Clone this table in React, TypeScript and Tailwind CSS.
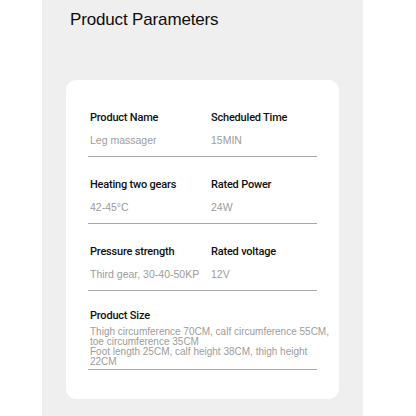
import React from 'react';

// 파라미터 행 데이터
const rows: { label: string; value: string }[][] = [
  [
    { label: 'Product Name', value: 'Leg massager' },
    { label: 'Scheduled Time', value: '15MIN' },
  ],
  [
    { label: 'Heating two gears', value: '42-45°C' },
    { label: 'Rated Power', value: '24W' },
  ],
  [
    { label: 'Pressure strength', value: 'Third gear, 30-40-50KP' },
    { label: 'Rated voltage', value: '12V' },
  ],
];

const sizeLines = [
  'Thigh circumference 70CM, calf circumference 55CM,',
  'toe circumference 35CM',
  'Foot length 25CM, calf height 38CM, thigh height',
  '22CM',
];

export default function App() {
  return (
    <div className="w-[416px] h-[416px] bg-white flex justify-start font-['Liberation_Sans',Arial,sans-serif]">
      <div className="ml-[42px] w-[321px] h-full bg-[#efefef] flex flex-col">
        {/* 제목 */}
        <h1 className="pt-[10px] pl-[28px] text-[17px] leading-[20px] tracking-[-0.15px] text-[#0d0d0d]">
          Product Parameters
        </h1>

        {/* 카드 */}
        <section className="mt-[50px] mx-[24px] rounded-[10px] bg-white pt-[10px] pb-[29px] pl-[22px] pr-[22px]">
          {rows.map((row, i) => (
            <div key={i} className="grid grid-cols-[121px_1fr] pt-[22px] pb-[10px] border-b border-[#a9a9a9]">
              {row.map((cell) => (
                <div key={cell.label} className="pl-[2px]">
                  <div className="text-[11px] leading-[12px] font-medium text-[#111] font-['Roboto',sans-serif] tracking-[-0.2px]">
                    {cell.label}
                  </div>
                  <div className="mt-[10px] text-[10.5px] leading-[12px] text-[#9c9c9c]">{cell.value}</div>
                </div>
              ))}
            </div>
          ))}

          {/* 사이즈 */}
          <div className="pt-[19px] pb-[2px] border-b border-[#a9a9a9] pl-[2px]">
            <div className="text-[11px] leading-[12px] font-medium text-[#111] font-['Roboto',sans-serif] tracking-[-0.2px]">
              Product Size
            </div>
            <div className="mt-[5px] text-[10px] leading-[10px] text-[#9c9c9c] whitespace-nowrap">
              {sizeLines.map((l) => (
                <div key={l}>{l}</div>
              ))}
            </div>
          </div>
        </section>
      </div>
    </div>
  );
}
